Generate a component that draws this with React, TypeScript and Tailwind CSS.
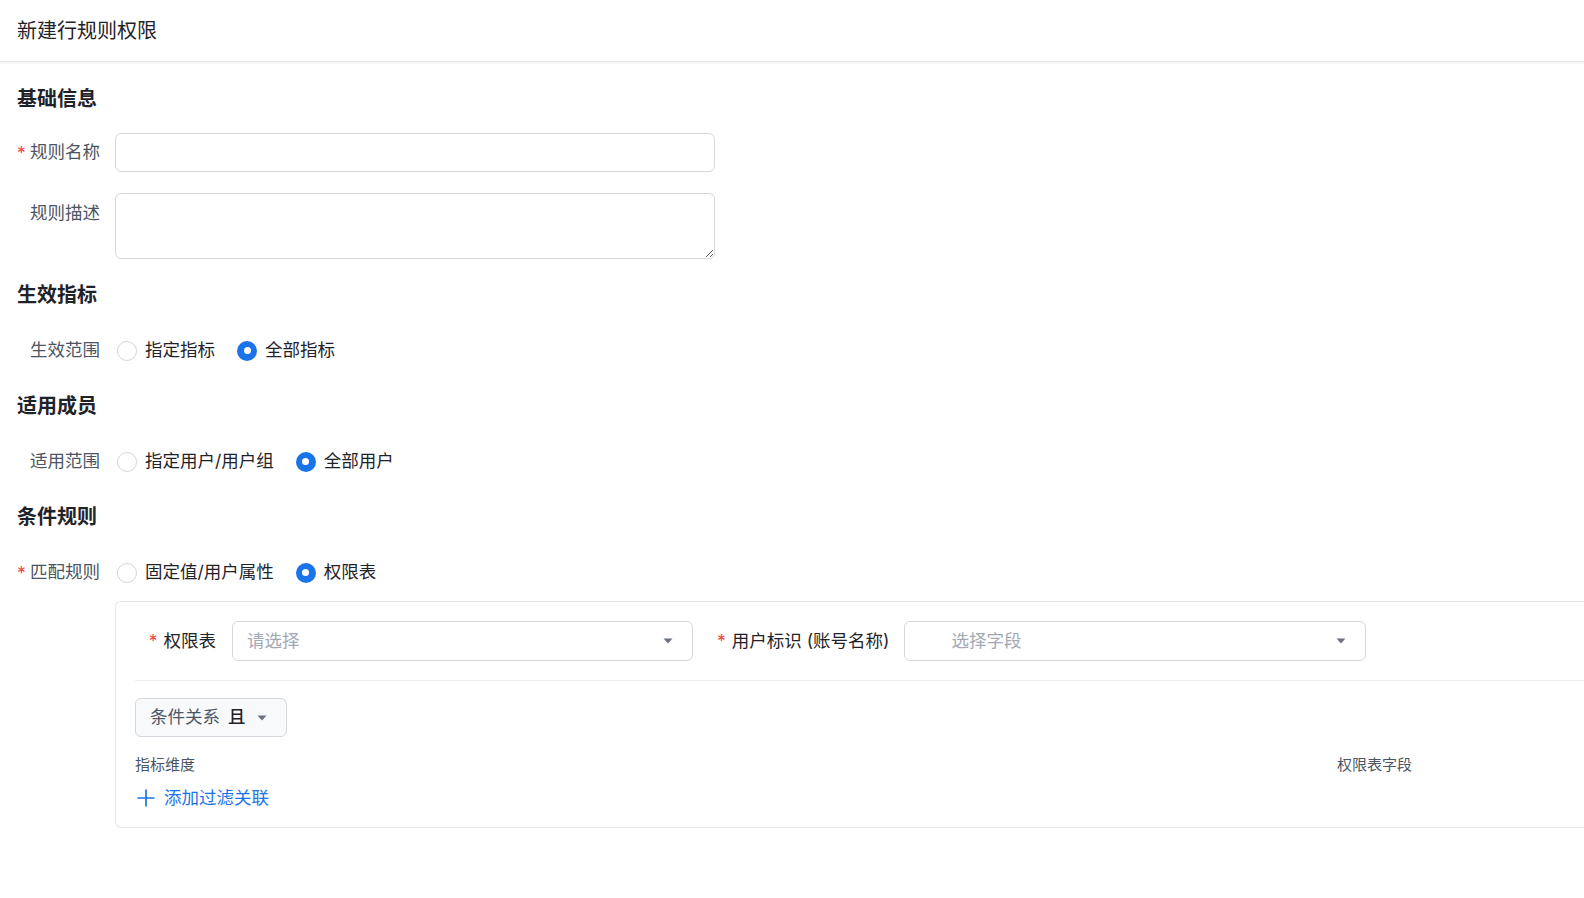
import React from "react";

const FONT = "font-['Inter','Noto_Sans_CJK_SC',sans-serif]";

function Caret() {
  return (
    <svg width="10" height="6" viewBox="0 0 10 6" className="shrink-0">
      <path d="M0.5 0.5 H9.5 L5 5.5 Z" fill="#6b7280" />
    </svg>
  );
}

function Radio({ checked, label }: { checked?: boolean; label: string }) {
  return (
    <label className="flex items-center gap-2 mr-[22px]">
      {checked ? (
        <span className="w-5 h-5 rounded-full bg-[#1a73e8] flex items-center justify-center">
          <span className="w-[7px] h-[7px] rounded-full bg-white" />
        </span>
      ) : (
        <span className="w-5 h-5 rounded-full border border-[#d1d5db] bg-white" />
      )}
      <span className="text-[17.5px] text-[#1f2329] whitespace-nowrap">{label}</span>
    </label>
  );
}

function FieldLabel({ text, required, top }: { text: string; required?: boolean; top?: boolean }) {
  return (
    <div
      className={`w-[98px] shrink-0 pr-[15px] flex whitespace-nowrap text-[17.5px] text-[#4b5563] ${
        required ? "justify-between" : "justify-end"
      } ${top ? "items-start pt-[7px]" : "items-center"}`}
    >
      {required && <span className="text-[#f04747] mt-0.5">*</span>}
      <span>{text}</span>
    </div>
  );
}

function SectionTitle({ children, first }: { children: React.ReactNode; first?: boolean }) {
  return (
    <h2
      className={`h-7 leading-7 text-[20px] font-semibold text-[#1f2329] ${first ? "mb-[20px]" : "mb-[22px]"}`}
    >
      {children}
    </h2>
  );
}

export default function App() {
  return (
    <div className={`${FONT} w-full h-screen bg-white overflow-hidden`}>
      <header className="h-[62px] flex items-center px-[17px] border-b border-[#e5e7eb] shadow-[0_1px_3px_rgba(0,0,0,0.06)]">
        <h1 className="text-[20px] text-[#1f2329]">新建行规则权限</h1>
      </header>

      <main className="pl-[17px] pt-[23px]">
        <SectionTitle first>基础信息</SectionTitle>
        <div className="flex h-[39px] mb-[21px]">
          <FieldLabel text="规则名称" required />
          <input className="w-[600px] h-[39px] rounded-md border border-[#d4d7de] outline-none px-3" />
        </div>
        <div className="flex mb-[22px]">
          <FieldLabel text="规则描述" top />
          <textarea className="w-[600px] h-[66px] rounded-md border border-[#d4d7de] outline-none px-3 py-2 block" />
        </div>

        <SectionTitle>生效指标</SectionTitle>
        <div className="flex h-[39px] mb-[22px]">
          <FieldLabel text="生效范围" />
          <div className="flex items-center pl-[2px]">
            <Radio label="指定指标" />
            <Radio label="全部指标" checked />
          </div>
        </div>

        <SectionTitle>适用成员</SectionTitle>
        <div className="flex h-[39px] mb-[22px]">
          <FieldLabel text="适用范围" />
          <div className="flex items-center pl-[2px]">
            <Radio label="指定用户/用户组" />
            <Radio label="全部用户" checked />
          </div>
        </div>

        <SectionTitle>条件规则</SectionTitle>
        <div className="flex h-[39px] mb-[9px]">
          <FieldLabel text="匹配规则" required />
          <div className="flex items-center pl-[2px]">
            <Radio label="固定值/用户属性" />
            <Radio label="权限表" checked />
          </div>
        </div>

        <div className="ml-[98px] border border-r-0 border-[#e5e7eb] rounded-l-md pt-[19px] pb-[16px] pl-[19px]">
          <div className="flex items-center h-[40px]">
            <div className="w-[97px] shrink-0 pr-4 flex justify-end items-center text-[17.5px] text-[#1f2329] whitespace-nowrap">
              <span className="text-[#f04747] mr-1.5">*</span>
              权限表
            </div>
            <div className="w-[461px] h-[40px] rounded-md border border-[#d4d7de] flex items-center justify-between pl-[14px] pr-[19px]">
              <span className="text-[17.5px] text-[#a3a9b4]">请选择</span>
              <Caret />
            </div>
            <div className="pl-[24px] pr-[15px] flex items-center text-[17.5px] text-[#1f2329] whitespace-nowrap">
              <span className="text-[#f04747] mr-1.5">*</span>
              用户标识 (账号名称)
            </div>
            <div className="w-[462px] h-[40px] rounded-md border border-[#d4d7de] flex items-center justify-between pl-[46px] pr-[19px]">
              <span className="text-[17.5px] text-[#a3a9b4]">选择字段</span>
              <Caret />
            </div>
          </div>

          <div className="border-t border-[#eceef1] mt-[19px] mb-[17px]" />

          <button className="h-[39px] w-[152px] rounded-md border border-[#d4d7de] bg-[#f8f9fb] flex items-center pl-[14px] gap-[8px]">
            <span className="text-[17.5px] text-[#4b5563]">条件关系</span>
            <span className="text-[17.5px] font-medium text-[#1f2329]">且</span>
            <span className="ml-[3px]">
              <Caret />
            </span>
          </button>

          <div className="flex mt-[18px] text-[15px] text-[#4b5563] leading-5">
            <span className="w-[1202px]">指标维度</span>
            <span>权限表字段</span>
          </div>

          <div className="flex items-center gap-2 mt-[10px] text-[#1a73e8]">
            <svg width="20" height="20" viewBox="0 0 20 20" className="ml-[1px]">
              <path d="M10 1.5 V18.5 M1.5 10 H18.5" stroke="#1a73e8" strokeWidth="1.7" fill="none" />
            </svg>
            <span className="text-[17.5px]">添加过滤关联</span>
          </div>
        </div>
      </main>
    </div>
  );
}
